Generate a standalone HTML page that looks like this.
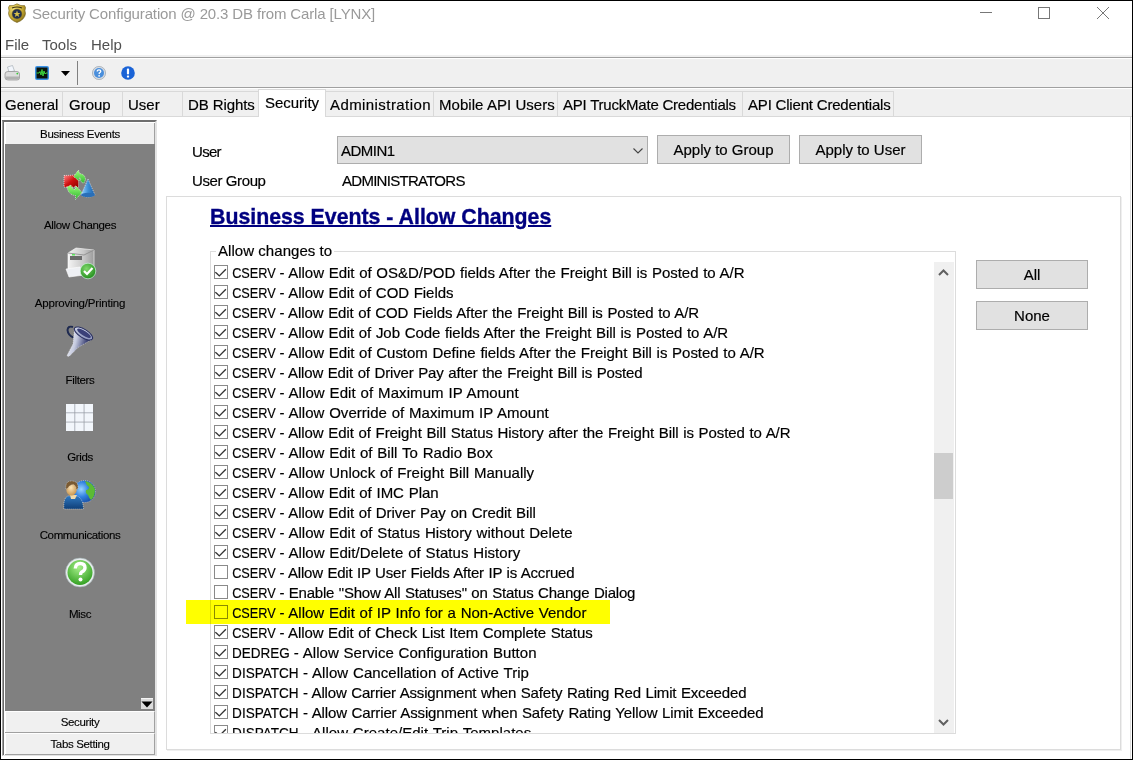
<!DOCTYPE html>
<html><head><meta charset="utf-8">
<style>
*{box-sizing:border-box;margin:0;padding:0}
html,body{width:1133px;height:760px;overflow:hidden;background:#fff;font-family:"Liberation Sans",sans-serif;color:#000}
.t,.tab,.btn,.rt{-webkit-text-stroke-width:0.18px}
.sl{-webkit-text-stroke-width:0.12px}
.a{position:absolute}
.t{position:absolute;white-space:nowrap;line-height:20px}
#frame{position:absolute;left:0;top:0;width:1133px;height:760px;border:1px solid #000;pointer-events:none;z-index:50}
.tab{position:absolute;top:91px;height:25px;background:#f0f0f0;border:1px solid #d9d9d9;border-bottom:none;font-size:15px;line-height:26px;text-align:center;white-space:nowrap}
.btn{position:absolute;background:#e1e1e1;border:1px solid #adadad;font-size:15px;text-align:center;white-space:nowrap}
.sl{position:absolute;left:5px;width:150px;text-align:center;font-size:11.5px;letter-spacing:-0.35px;line-height:14px;white-space:nowrap}
.row{position:absolute;left:214px;height:20px;white-space:nowrap}
.cb{position:absolute;left:0;top:0;width:14px;height:14px;border:1px solid #8a8a8a;background:transparent}
.rt{position:absolute;left:18px;top:-2px;font-size:15px;line-height:20px}
</style></head><body>
<div id="frame"></div>

<!-- title bar -->
<svg class="a" style="left:7px;top:3px" width="20" height="20" viewBox="0 0 20 20">
 <defs><radialGradient id="gbd" cx="0.35" cy="0.3" r="0.8"><stop offset="0" stop-color="#f4e27a"/><stop offset="0.6" stop-color="#c2a630"/><stop offset="1" stop-color="#7a6418"/></radialGradient></defs>
 <path d="M2.5 2.5 Q6 3.5 10 0.8 Q14 3.5 17.5 2.5 L18.5 4.5 Q17.5 7.5 18.5 10.5 Q18 16.5 10 19.5 Q2 16.5 1.5 10.5 Q2.5 7.5 1.5 4.5 Z" fill="url(#gbd)" stroke="#6e5a14" stroke-width="0.6"/>
 <path d="M5 5 Q10 3 15 5" stroke="#3a3010" stroke-width="1.2" fill="none"/>
 <circle cx="10" cy="11" r="5" fill="#22304e" stroke="#8a7420" stroke-width="0.5"/>
 <path d="M10 7.6 L10.9 10 L13.4 10 L11.4 11.5 L12.2 13.9 L10 12.4 L7.8 13.9 L8.6 11.5 L6.6 10 L9.1 10 Z" fill="#d8c24a"/>
</svg>
<div class="t" style="left:32px;top:3.5px;font-size:15px;color:#9a9a9a;letter-spacing:-0.14px;-webkit-text-stroke-width:0">Security Configuration @ 20.3 DB from Carla [LYNX]</div>
<svg class="a" style="left:975px;top:5px" width="140" height="18" viewBox="0 0 140 18">
 <path d="M5 7.5 H17" stroke="#777" stroke-width="1"/>
 <rect x="63.5" y="2.5" width="11" height="11" fill="none" stroke="#777" stroke-width="1"/>
 <path d="M122 2 L134 14 M134 2 L122 14" stroke="#777" stroke-width="1"/>
</svg>

<!-- menu -->
<div class="t" style="left:5px;top:35px;font-size:15px;color:#505050;-webkit-text-stroke-width:0">File</div>
<div class="t" style="left:42px;top:35px;font-size:15px;color:#505050;-webkit-text-stroke-width:0">Tools</div>
<div class="t" style="left:91px;top:35px;font-size:15px;color:#505050;-webkit-text-stroke-width:0">Help</div>

<!-- toolbar -->
<div class="a" style="left:1px;top:55px;width:1131px;height:2px;background:#f0f0f0"></div>
<div class="a" style="left:1px;top:57px;width:1131px;height:1px;background:#a0a0a0"></div>
<div class="a" style="left:1px;top:58px;width:1131px;height:1px;background:#fff"></div>
<div class="a" style="left:1px;top:59px;width:1131px;height:28px;background:#f0f0f0"></div>
<div class="a" style="left:1px;top:87px;width:1131px;height:1px;background:#a0a0a0"></div>
<div class="a" style="left:1px;top:88px;width:1131px;height:1px;background:#fff"></div>
<div class="a" style="left:1px;top:89px;width:1131px;height:27px;background:#f0f0f0"></div>
<div class="a" style="left:1px;top:116px;width:1131px;height:1px;background:#d9d9d9"></div>

<!-- toolbar icons -->
<svg class="a" style="left:4px;top:64px" width="18" height="18" viewBox="0 0 18 18">
 <path d="M3.5 3 L8.5 1.5 L10.5 7 L5 8 Z" fill="#f2f6fc" stroke="#9aa4ad" stroke-width="0.6"/>
 <path d="M1 10 Q1 7.5 4 7.5 L13 7.5 Q15.5 7.5 15.5 10 L15.5 14 Q15.5 16 13 16 L4 16 Q1 16 1 13.5 Z" fill="#dcdcdc" stroke="#8c8c8c" stroke-width="0.7"/>
 <path d="M1.5 12.5 L15 12.5 L15 14 Q15 15.5 13 15.5 L4 15.5 Q1.5 15.5 1.5 13.5 Z" fill="#b0b0b0"/>
 <circle cx="13.3" cy="9.6" r="0.9" fill="#3c3"/>
</svg>
<svg class="a" style="left:35px;top:66px" width="14" height="14" viewBox="0 0 14 14">
 <rect x="0" y="0" width="14" height="14" rx="2" fill="#3a92e6"/>
 <rect x="1.5" y="1.5" width="11" height="11" fill="#0a140a"/>
 <path d="M1.5 7 H4 L5 5.5 L6 9 L7 3.5 L8 10 L9 5 L10 8 L11 7 H12.5" stroke="#3cd43c" stroke-width="1" fill="none"/>
</svg>
<svg class="a" style="left:60px;top:70px" width="11" height="7" viewBox="0 0 11 7"><path d="M1 1 H10 L5.5 6 Z" fill="#000"/></svg>
<div class="a" style="left:77px;top:61px;width:1px;height:24px;background:#808080"></div>
<svg class="a" style="left:92px;top:66px" width="14" height="14" viewBox="0 0 14 14">
 <circle cx="7" cy="7" r="6.6" fill="#d6dbe2" stroke="#9aa3ad" stroke-width="0.7"/>
 <circle cx="7" cy="7" r="5" fill="#4a8fdc"/>
 <path d="M5.2 5.6 Q5.2 3.8 7 3.8 Q8.8 3.8 8.8 5.3 Q8.8 6.4 7.3 7 L7.1 8" stroke="#fff" stroke-width="1.3" fill="none"/>
 <circle cx="7.1" cy="9.8" r="0.85" fill="#fff"/>
</svg>
<svg class="a" style="left:121px;top:66px" width="14" height="14" viewBox="0 0 14 14">
 <circle cx="7" cy="7" r="6.8" fill="#1a63d6"/>
 <rect x="5.9" y="2.6" width="2.2" height="5.8" rx="0.8" fill="#fff"/>
 <rect x="5.9" y="9.5" width="2.2" height="2" rx="0.6" fill="#fff"/>
</svg>

<!-- tabs -->
<div class="tab" style="left:1px;width:62px;border-left:none;text-align:left;padding-left:4px">General</div>
<div class="tab" style="left:62px;width:61px;text-align:left;padding-left:6px">Group</div>
<div class="tab" style="left:122px;width:61px;text-align:left;padding-left:5px">User</div>
<div class="tab" style="left:182px;width:77px;text-align:left;padding-left:5px;letter-spacing:-0.1px">DB Rights</div>
<div class="tab" style="left:325px;width:109px;text-align:left;padding-left:4px;letter-spacing:0.42px">Administration</div>
<div class="tab" style="left:433px;width:125px;text-align:left;padding-left:5px;letter-spacing:0.05px">Mobile API Users</div>
<div class="tab" style="left:557px;width:186px;text-align:left;padding-left:5px;letter-spacing:-0.22px">API TruckMate Credentials</div>
<div class="tab" style="left:742px;width:152px;text-align:left;padding-left:5px;letter-spacing:-0.19px">API Client Credentials</div>
<div class="tab" style="left:258px;top:89px;height:28px;width:68px;background:#fff;line-height:26px;z-index:2">Security</div>

<!-- sidebar -->
<div class="a" style="left:2px;top:120px;width:155px;height:636px;border-top:2px solid #6e6e6e;border-left:1px solid #a0a0a0;border-right:2px solid #e3e3e3;border-bottom:1px solid #e3e3e3;background:#fff"></div>
<div class="a" style="left:3px;top:122px;width:1px;height:633px;background:#696969"></div>
<div class="a" style="left:5px;top:123px;width:150px;height:21px;background:#f0f0f0;border-left:1px solid #fff;border-right:1px solid #a0a0a0"></div>
<div class="sl" style="top:127px">Business Events</div>
<div class="a" style="left:5px;top:144px;width:150px;height:567px;background:#808080"></div>

<!-- sidebar bottom buttons -->
<div class="a" style="left:5px;top:711px;width:150px;height:21px;background:#f0f0f0;border-top:1px solid #fff;border-left:1px solid #fff;border-right:1px solid #a0a0a0"></div>
<div class="a" style="left:5px;top:732px;width:150px;height:1px;background:#a0a0a0"></div>
<div class="a" style="left:5px;top:733px;width:150px;height:21px;background:#f0f0f0;border-top:1px solid #fff;border-left:1px solid #fff;border-right:1px solid #a0a0a0"></div>
<div class="a" style="left:5px;top:754px;width:150px;height:1px;background:#a0a0a0"></div>
<div class="sl" style="top:715px">Security</div>
<div class="sl" style="top:737px">Tabs Setting</div>

<!-- sidebar labels -->
<div class="sl" style="top:218px">Allow Changes</div>
<div class="sl" style="top:296px;letter-spacing:-0.2px">Approving/Printing</div>
<div class="sl" style="top:373px">Filters</div>
<div class="sl" style="top:450px">Grids</div>
<div class="sl" style="top:528px">Communications</div>
<div class="sl" style="top:607px">Misc</div>


<!-- sidebar icons -->
<svg class="a" style="left:58px;top:164px" width="44" height="42" viewBox="0 0 44 42">
 <defs>
  <linearGradient id="gr1" x1="0" y1="0" x2="1" y2="1"><stop offset="0" stop-color="#ff8a8a"/><stop offset="0.5" stop-color="#d01010"/><stop offset="1" stop-color="#900000"/></linearGradient>
  <linearGradient id="gg1" x1="0" y1="0" x2="0" y2="1"><stop offset="0" stop-color="#9cff7a"/><stop offset="1" stop-color="#2fb52f"/></linearGradient>
  <linearGradient id="gb1" x1="0" y1="0" x2="1" y2="0"><stop offset="0" stop-color="#9fd6ff"/><stop offset="0.5" stop-color="#3c8fd8"/><stop offset="1" stop-color="#1d5ea8"/></linearGradient>
 </defs>
 <path d="M6 11.5 L20.5 11 L20.5 23 L6 23 Z" fill="url(#gr1)" stroke="#fff" stroke-width="0.6" stroke-dasharray="1 1"/>
 <path d="M15.5 12.5 L20.5 6 L21.5 9.5 Q27 10 27.5 15.5 L25.5 19.5 L22.5 17 Q23 14 21.5 13.5 L21 17 Z" fill="url(#gg1)" stroke="#fff" stroke-width="0.6" stroke-dasharray="1 1"/>
 <path d="M9 23 L13 21 Q14 25.5 17.5 25.5 L17.5 21.5 L24 28.5 L17.5 35.5 L17.5 31.5 Q10.5 31 9 23 Z" fill="url(#gg1)" stroke="#fff" stroke-width="0.6" stroke-dasharray="1 1"/>
 <path d="M30 15 L37 31 Q30 35 23 31 Z" fill="url(#gb1)" stroke="#fff" stroke-width="0.6" stroke-dasharray="1 1"/>
 <ellipse cx="30" cy="31" rx="7" ry="2.2" fill="#2a6fb8"/>
</svg>
<svg class="a" style="left:58px;top:242px" width="44" height="42" viewBox="0 0 44 42">
 <defs>
  <linearGradient id="gp1" x1="0" y1="0" x2="1" y2="0"><stop offset="0" stop-color="#f4f4f4"/><stop offset="0.6" stop-color="#c8c8c8"/><stop offset="1" stop-color="#9a9a9a"/></linearGradient>
  <radialGradient id="gc1" cx="0.4" cy="0.35" r="0.7"><stop offset="0" stop-color="#7fd86a"/><stop offset="1" stop-color="#1f8a1a"/></radialGradient>
 </defs>
 <path d="M10 11 L18 6 L36 8 L36 26 L24 33 L10 30 Z" fill="url(#gp1)" stroke="#fff" stroke-width="0.6"/>
 <path d="M10 11 L26 13 L36 8" fill="none" stroke="#888" stroke-width="0.8"/>
 <rect x="12" y="14" width="12" height="4" fill="#6a6a6a"/>
 <rect x="14" y="12" width="3" height="1.5" fill="#5ce65c"/>
 <path d="M8 27 L22 25 L26 33 L11 35 Z" fill="#eef0f4" stroke="#fff" stroke-width="0.6"/>
 <circle cx="30" cy="29" r="7.8" fill="url(#gc1)" stroke="#dfe" stroke-width="0.6"/>
 <path d="M26 29 L29 32 L34.5 26" stroke="#fff" stroke-width="2.2" fill="none"/>
</svg>
<svg class="a" style="left:58px;top:318px" width="44" height="44" viewBox="0 0 44 44">
 <defs>
  <linearGradient id="gf1" x1="0" y1="0" x2="1" y2="0.3"><stop offset="0" stop-color="#ffffff"/><stop offset="0.45" stop-color="#c6cbe0"/><stop offset="0.8" stop-color="#4a5080"/><stop offset="1" stop-color="#1e2450"/></linearGradient>
  <linearGradient id="gf2" x1="0" y1="0" x2="1" y2="1"><stop offset="0" stop-color="#e6ecf8"/><stop offset="1" stop-color="#7a82b0"/></linearGradient>
 </defs>
 <path d="M15 9 Q10 7.5 9.5 12 Q10 17.5 15.5 19.5" stroke="#1e2a50" stroke-width="2" fill="none"/>
 <path d="M16.6 9.9 L15 26 L9 37.5 Q10 39 11.5 38 L20 29.5 L34.4 21.1 Z" fill="url(#gf1)" stroke="#f4f4f4" stroke-width="0.5" stroke-dasharray="1 1"/>
 <ellipse cx="25.5" cy="15.5" rx="10.5" ry="4.2" transform="rotate(32 25.5 15.5)" fill="url(#gf2)" stroke="#2a3060" stroke-width="1"/>
 <ellipse cx="26" cy="15.2" rx="8" ry="2.4" transform="rotate(32 26 15.2)" fill="#3a4078"/>
</svg>
<svg class="a" style="left:66px;top:404px" width="28" height="28" viewBox="0 0 28 28">
 <rect x="0" y="0" width="27" height="27" fill="#8f959e"/>
 <g fill="#f2f6fb">
 <rect x="0" y="0" width="8.5" height="8.5"/><rect x="9.2" y="0" width="8.5" height="8.5"/><rect x="18.4" y="0" width="8.6" height="8.5"/>
 <rect x="0" y="9.2" width="8.5" height="8.5"/><rect x="9.2" y="9.2" width="8.5" height="8.5"/><rect x="18.4" y="9.2" width="8.6" height="8.5"/>
 <rect x="0" y="18.4" width="8.5" height="8.6"/><rect x="9.2" y="18.4" width="8.5" height="8.6"/><rect x="18.4" y="18.4" width="8.6" height="8.6"/>
 </g>
</svg>
<svg class="a" style="left:58px;top:472px" width="44" height="42" viewBox="0 0 44 42">
 <defs>
  <radialGradient id="gw1" cx="0.35" cy="0.4" r="0.7"><stop offset="0" stop-color="#9ad4ff"/><stop offset="0.5" stop-color="#2f7fe0"/><stop offset="1" stop-color="#16489a"/></radialGradient>
  <radialGradient id="gs1" cx="0.45" cy="0.4" r="0.6"><stop offset="0" stop-color="#ffe6b8"/><stop offset="1" stop-color="#c89650"/></radialGradient>
  <linearGradient id="gbd1" x1="0" y1="0" x2="0" y2="1"><stop offset="0" stop-color="#2f78c0"/><stop offset="1" stop-color="#0f3f78"/></linearGradient>
 </defs>
 <circle cx="26.5" cy="19.5" r="11" fill="url(#gw1)" stroke="#eee" stroke-width="0.5" stroke-dasharray="1 1"/>
 <path d="M27 9 Q34 10 37 17 Q37 25 33 28 Q31 26 30 23 Q27 21 28 18 Q31 18 31 15 Q28 13 27 9 Z" fill="#5cba34"/>
 <path d="M6 37 Q5 26 10 24 L19 24 Q25 26 25.5 37 Z" fill="url(#gbd1)" stroke="#fff" stroke-width="0.5" stroke-dasharray="1 1"/>
 <path d="M12 23 L19 23 L17 27 L13 27 Z" fill="#f0d8a8"/>
 <ellipse cx="13.5" cy="17" rx="5.3" ry="6.6" fill="url(#gs1)"/>
 <path d="M8 17 Q7 9 13.5 9 Q20.5 9 20 16 Q19.5 18 18.5 18 Q18 13 15 12.5 Q11 13 9 17.5 Z" fill="#7a5a32" stroke="#fff" stroke-width="0.4" stroke-dasharray="1 1"/>
</svg>
<svg class="a" style="left:58px;top:550px" width="44" height="44" viewBox="0 0 44 44">
 <defs><radialGradient id="gq1" cx="0.45" cy="0.3" r="0.75"><stop offset="0" stop-color="#a6f08a"/><stop offset="1" stop-color="#2c9a1c"/></radialGradient></defs>
 <circle cx="22" cy="22.5" r="14.5" fill="#e8ecef" stroke="#9aa" stroke-width="0.6"/>
 <circle cx="22" cy="22.5" r="12.5" fill="url(#gq1)"/>
 <path d="M17.3 18.5 Q17.5 13.5 22.3 13.5 Q27 13.5 27 17.8 Q27 20.5 23.7 22 Q22.5 22.8 22.5 25" stroke="#fff" stroke-width="3.4" fill="none"/>
 <circle cx="22.5" cy="29.5" r="2" fill="#fff"/>
</svg>

<!-- sidebar scroll arrow -->
<div class="a" style="left:141px;top:698px;width:12px;height:11px;background:#dcdcdc;border-top:1px solid #f4f4f4"></div>
<svg class="a" style="left:141px;top:698px" width="12" height="11" viewBox="0 0 12 11"><path d="M0.5 3.5 H11.5 L6 9.5 Z" fill="#000"/></svg>

<!-- form -->
<div class="t" style="left:192px;top:142px;font-size:15px;letter-spacing:-0.7px">User</div>
<div class="t" style="left:192px;top:171px;font-size:15px;letter-spacing:-0.4px">User Group</div>
<div class="a" style="left:337px;top:136px;width:311px;height:28px;background:#e1e1e1;border:1px solid #adadad"></div>
<div class="t" style="left:341px;top:141px;font-size:15px;letter-spacing:-0.5px">ADMIN1</div>
<svg class="a" style="left:631.5px;top:147px" width="12" height="8" viewBox="0 0 12 8"><path d="M1.5 1.5 L6 6 L10.5 1.5" stroke="#444" stroke-width="1.1" fill="none"/></svg>
<div class="t" style="left:342px;top:171px;font-size:15px;letter-spacing:-0.72px">ADMINISTRATORS</div>
<div class="btn" style="left:657px;top:135px;width:133px;height:29px;line-height:27px">Apply to Group</div>
<div class="btn" style="left:799px;top:135px;width:123px;height:29px;line-height:27px">Apply to User</div>

<!-- panel -->
<div class="a" style="left:166px;top:196px;width:955px;height:554px;border:1px solid #dcdcdc"></div>
<div class="a" style="left:1121px;top:197px;width:1px;height:554px;background:#efefef"></div>
<div class="a" style="left:167px;top:750px;width:955px;height:1px;background:#efefef"></div>
<div class="a" style="left:1130px;top:117px;width:1px;height:642px;background:#dcdcdc"></div>
<div class="t" style="left:210px;top:204px;font-size:21.3px;font-weight:bold;color:#000080;text-decoration:underline;text-underline-offset:1px;text-decoration-thickness:2px;line-height:26px;-webkit-text-stroke-width:0.35px">Business Events - Allow Changes</div>

<!-- group box -->
<div class="a" style="left:210px;top:251px;width:746px;height:483px;border:1px solid #dcdcdc"></div>
<div class="t" style="left:216px;top:241px;font-size:15px;background:#fff;padding:0 2px;letter-spacing:0.05px">Allow changes to</div>

<!-- highlight -->
<div class="a" style="left:186px;top:600px;width:424px;height:24px;background:#ffff00;mix-blend-mode:multiply;z-index:5"></div>

<!-- list -->
<div id="list" class="a" style="left:0;top:0;width:954px;height:733px;overflow:hidden">
<div class="row" style="top:265px"><div class="cb"></div><svg class="a" style="left:0;top:0" width="14" height="14" viewBox="0 0 14 14"><path d="M1.3 7.2 L2.6 8.2 L5.3 10.9 L11.9 4.2" stroke="#333" stroke-width="1.35" fill="none"/></svg><div class="rt" style="transform:scaleX(0.848);transform-origin:1px 0">CSERV</div><div class="rt" style="left:65.4px;letter-spacing:-0.029px;word-spacing:0.6px">- Allow Edit of OS&amp;D/POD fields After the Freight Bill is Posted to A/R</div></div>
<div class="row" style="top:285px"><div class="cb"></div><svg class="a" style="left:0;top:0" width="14" height="14" viewBox="0 0 14 14"><path d="M1.3 7.2 L2.6 8.2 L5.3 10.9 L11.9 4.2" stroke="#333" stroke-width="1.35" fill="none"/></svg><div class="rt" style="transform:scaleX(0.848);transform-origin:1px 0">CSERV</div><div class="rt" style="left:65.4px;letter-spacing:-0.06px;word-spacing:0.6px">- Allow Edit of COD Fields</div></div>
<div class="row" style="top:305px"><div class="cb"></div><svg class="a" style="left:0;top:0" width="14" height="14" viewBox="0 0 14 14"><path d="M1.3 7.2 L2.6 8.2 L5.3 10.9 L11.9 4.2" stroke="#333" stroke-width="1.35" fill="none"/></svg><div class="rt" style="transform:scaleX(0.848);transform-origin:1px 0">CSERV</div><div class="rt" style="left:65.4px;letter-spacing:-0.101px;word-spacing:0.6px">- Allow Edit of COD Fields After the Freight Bill is Posted to A/R</div></div>
<div class="row" style="top:325px"><div class="cb"></div><svg class="a" style="left:0;top:0" width="14" height="14" viewBox="0 0 14 14"><path d="M1.3 7.2 L2.6 8.2 L5.3 10.9 L11.9 4.2" stroke="#333" stroke-width="1.35" fill="none"/></svg><div class="rt" style="transform:scaleX(0.848);transform-origin:1px 0">CSERV</div><div class="rt" style="left:65.4px;letter-spacing:-0.057px;word-spacing:0.6px">- Allow Edit of Job Code fields After the Freight Bill is Posted to A/R</div></div>
<div class="row" style="top:345px"><div class="cb"></div><svg class="a" style="left:0;top:0" width="14" height="14" viewBox="0 0 14 14"><path d="M1.3 7.2 L2.6 8.2 L5.3 10.9 L11.9 4.2" stroke="#333" stroke-width="1.35" fill="none"/></svg><div class="rt" style="transform:scaleX(0.848);transform-origin:1px 0">CSERV</div><div class="rt" style="left:65.4px;letter-spacing:-0.034px;word-spacing:0.6px">- Allow Edit of Custom Define fields After the Freight Bill is Posted to A/R</div></div>
<div class="row" style="top:365px"><div class="cb"></div><svg class="a" style="left:0;top:0" width="14" height="14" viewBox="0 0 14 14"><path d="M1.3 7.2 L2.6 8.2 L5.3 10.9 L11.9 4.2" stroke="#333" stroke-width="1.35" fill="none"/></svg><div class="rt" style="transform:scaleX(0.848);transform-origin:1px 0">CSERV</div><div class="rt" style="left:65.4px;letter-spacing:-0.147px;word-spacing:0.6px">- Allow Edit of Driver Pay after the Freight Bill is Posted</div></div>
<div class="row" style="top:385px"><div class="cb"></div><svg class="a" style="left:0;top:0" width="14" height="14" viewBox="0 0 14 14"><path d="M1.3 7.2 L2.6 8.2 L5.3 10.9 L11.9 4.2" stroke="#333" stroke-width="1.35" fill="none"/></svg><div class="rt" style="transform:scaleX(0.848);transform-origin:1px 0">CSERV</div><div class="rt" style="left:65.4px;letter-spacing:0.079px;word-spacing:0.6px">- Allow Edit of Maximum IP Amount</div></div>
<div class="row" style="top:405px"><div class="cb"></div><svg class="a" style="left:0;top:0" width="14" height="14" viewBox="0 0 14 14"><path d="M1.3 7.2 L2.6 8.2 L5.3 10.9 L11.9 4.2" stroke="#333" stroke-width="1.35" fill="none"/></svg><div class="rt" style="transform:scaleX(0.848);transform-origin:1px 0">CSERV</div><div class="rt" style="left:65.4px;letter-spacing:0.027px;word-spacing:0.6px">- Allow Override of Maximum IP Amount</div></div>
<div class="row" style="top:425px"><div class="cb"></div><svg class="a" style="left:0;top:0" width="14" height="14" viewBox="0 0 14 14"><path d="M1.3 7.2 L2.6 8.2 L5.3 10.9 L11.9 4.2" stroke="#333" stroke-width="1.35" fill="none"/></svg><div class="rt" style="transform:scaleX(0.848);transform-origin:1px 0">CSERV</div><div class="rt" style="left:65.4px;letter-spacing:-0.078px;word-spacing:0.6px">- Allow Edit of Freight Bill Status History after the Freight Bill is Posted to A/R</div></div>
<div class="row" style="top:445px"><div class="cb"></div><svg class="a" style="left:0;top:0" width="14" height="14" viewBox="0 0 14 14"><path d="M1.3 7.2 L2.6 8.2 L5.3 10.9 L11.9 4.2" stroke="#333" stroke-width="1.35" fill="none"/></svg><div class="rt" style="transform:scaleX(0.848);transform-origin:1px 0">CSERV</div><div class="rt" style="left:65.4px;letter-spacing:0.03px;word-spacing:0.6px">- Allow Edit of Bill To Radio Box</div></div>
<div class="row" style="top:465px"><div class="cb"></div><svg class="a" style="left:0;top:0" width="14" height="14" viewBox="0 0 14 14"><path d="M1.3 7.2 L2.6 8.2 L5.3 10.9 L11.9 4.2" stroke="#333" stroke-width="1.35" fill="none"/></svg><div class="rt" style="transform:scaleX(0.848);transform-origin:1px 0">CSERV</div><div class="rt" style="left:65.4px;letter-spacing:0.027px;word-spacing:0.6px">- Allow Unlock of Freight Bill Manually</div></div>
<div class="row" style="top:485px"><div class="cb"></div><svg class="a" style="left:0;top:0" width="14" height="14" viewBox="0 0 14 14"><path d="M1.3 7.2 L2.6 8.2 L5.3 10.9 L11.9 4.2" stroke="#333" stroke-width="1.35" fill="none"/></svg><div class="rt" style="transform:scaleX(0.848);transform-origin:1px 0">CSERV</div><div class="rt" style="left:65.4px;letter-spacing:-0.021px;word-spacing:0.6px">- Allow Edit of IMC Plan</div></div>
<div class="row" style="top:505px"><div class="cb"></div><svg class="a" style="left:0;top:0" width="14" height="14" viewBox="0 0 14 14"><path d="M1.3 7.2 L2.6 8.2 L5.3 10.9 L11.9 4.2" stroke="#333" stroke-width="1.35" fill="none"/></svg><div class="rt" style="transform:scaleX(0.848);transform-origin:1px 0">CSERV</div><div class="rt" style="left:65.4px;letter-spacing:-0.065px;word-spacing:0.6px">- Allow Edit of Driver Pay on Credit Bill</div></div>
<div class="row" style="top:525px"><div class="cb"></div><svg class="a" style="left:0;top:0" width="14" height="14" viewBox="0 0 14 14"><path d="M1.3 7.2 L2.6 8.2 L5.3 10.9 L11.9 4.2" stroke="#333" stroke-width="1.35" fill="none"/></svg><div class="rt" style="transform:scaleX(0.848);transform-origin:1px 0">CSERV</div><div class="rt" style="left:65.4px;letter-spacing:0.034px;word-spacing:0.6px">- Allow Edit of Status History without Delete</div></div>
<div class="row" style="top:545px"><div class="cb"></div><svg class="a" style="left:0;top:0" width="14" height="14" viewBox="0 0 14 14"><path d="M1.3 7.2 L2.6 8.2 L5.3 10.9 L11.9 4.2" stroke="#333" stroke-width="1.35" fill="none"/></svg><div class="rt" style="transform:scaleX(0.848);transform-origin:1px 0">CSERV</div><div class="rt" style="left:65.4px;letter-spacing:0.054px;word-spacing:0.6px">- Allow Edit/Delete of Status History</div></div>
<div class="row" style="top:565px"><div class="cb"></div><div class="rt" style="transform:scaleX(0.848);transform-origin:1px 0">CSERV</div><div class="rt" style="left:65.4px;letter-spacing:-0.194px;word-spacing:0.6px">- Allow Edit IP User Fields After IP is Accrued</div></div>
<div class="row" style="top:585px"><div class="cb"></div><div class="rt" style="transform:scaleX(0.848);transform-origin:1px 0">CSERV</div><div class="rt" style="left:65.4px;letter-spacing:-0.206px;word-spacing:0.6px">- Enable &quot;Show All Statuses&quot; on Status Change Dialog</div></div>
<div class="row" style="top:605px"><div class="cb"></div><div class="rt" style="transform:scaleX(0.848);transform-origin:1px 0">CSERV</div><div class="rt" style="left:65.4px;letter-spacing:0.001px;word-spacing:0.6px">- Allow Edit of IP Info for a Non-Active Vendor</div></div>
<div class="row" style="top:625px"><div class="cb"></div><svg class="a" style="left:0;top:0" width="14" height="14" viewBox="0 0 14 14"><path d="M1.3 7.2 L2.6 8.2 L5.3 10.9 L11.9 4.2" stroke="#333" stroke-width="1.35" fill="none"/></svg><div class="rt" style="transform:scaleX(0.848);transform-origin:1px 0">CSERV</div><div class="rt" style="left:65.4px;letter-spacing:-0.109px;word-spacing:0.6px">- Allow Edit of Check List Item Complete Status</div></div>
<div class="row" style="top:645px"><div class="cb"></div><svg class="a" style="left:0;top:0" width="14" height="14" viewBox="0 0 14 14"><path d="M1.3 7.2 L2.6 8.2 L5.3 10.9 L11.9 4.2" stroke="#333" stroke-width="1.35" fill="none"/></svg><div class="rt" style="transform:scaleX(0.9);transform-origin:1px 0">DEDREG</div><div class="rt" style="left:79.8px;letter-spacing:0.029px;word-spacing:0.6px">- Allow Service Configuration Button</div></div>
<div class="row" style="top:665px"><div class="cb"></div><svg class="a" style="left:0;top:0" width="14" height="14" viewBox="0 0 14 14"><path d="M1.3 7.2 L2.6 8.2 L5.3 10.9 L11.9 4.2" stroke="#333" stroke-width="1.35" fill="none"/></svg><div class="rt" style="transform:scaleX(0.904);transform-origin:1px 0">DISPATCH</div><div class="rt" style="left:89.0px;letter-spacing:0.059px;word-spacing:0.6px">- Allow Cancellation of Active Trip</div></div>
<div class="row" style="top:685px"><div class="cb"></div><svg class="a" style="left:0;top:0" width="14" height="14" viewBox="0 0 14 14"><path d="M1.3 7.2 L2.6 8.2 L5.3 10.9 L11.9 4.2" stroke="#333" stroke-width="1.35" fill="none"/></svg><div class="rt" style="transform:scaleX(0.904);transform-origin:1px 0">DISPATCH</div><div class="rt" style="left:89.0px;letter-spacing:-0.166px;word-spacing:0.6px">- Allow Carrier Assignment when Safety Rating Red Limit Exceeded</div></div>
<div class="row" style="top:705px"><div class="cb"></div><svg class="a" style="left:0;top:0" width="14" height="14" viewBox="0 0 14 14"><path d="M1.3 7.2 L2.6 8.2 L5.3 10.9 L11.9 4.2" stroke="#333" stroke-width="1.35" fill="none"/></svg><div class="rt" style="transform:scaleX(0.904);transform-origin:1px 0">DISPATCH</div><div class="rt" style="left:89.0px;letter-spacing:-0.128px;word-spacing:0.6px">- Allow Carrier Assignment when Safety Rating Yellow Limit Exceeded</div></div>
<div class="row" style="top:725px"><div class="cb"></div><svg class="a" style="left:0;top:0" width="14" height="14" viewBox="0 0 14 14"><path d="M1.3 7.2 L2.6 8.2 L5.3 10.9 L11.9 4.2" stroke="#333" stroke-width="1.35" fill="none"/></svg><div class="rt" style="transform:scaleX(0.904);transform-origin:1px 0">DISPATCH</div><div class="rt" style="left:89.0px;letter-spacing:0.031px;word-spacing:0.6px">- Allow Create/Edit Trip Templates</div></div>
</div>
<!--/list-->
<!-- scrollbar -->
<div class="a" style="left:934px;top:262px;width:20px;height:471px;background:#f0f0f0"></div>
<div class="a" style="left:934px;top:453px;width:19px;height:46px;background:#cdcdcd"></div>
<svg class="a" style="left:937px;top:267px" width="13" height="12" viewBox="0 0 13 12"><path d="M2 8 L6.5 3.5 L11 8" stroke="#606060" stroke-width="2" fill="none"/></svg>
<svg class="a" style="left:937px;top:716px" width="13" height="12" viewBox="0 0 13 12"><path d="M2 4 L6.5 8.5 L11 4" stroke="#606060" stroke-width="2" fill="none"/></svg>

<div class="btn" style="left:976px;top:260px;width:112px;height:29px;line-height:27px">All</div>
<div class="btn" style="left:976px;top:301px;width:112px;height:29px;line-height:27px">None</div>

</body></html>
